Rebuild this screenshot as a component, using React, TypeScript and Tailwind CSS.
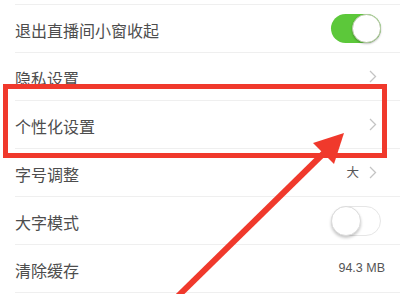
import React from "react";

const font = { fontFamily: '"Noto Sans CJK SC", "Noto Sans", sans-serif' };

function Chevron() {
  return (
    <svg width="8" height="13" viewBox="0 0 8 13" className="block">
      <path d="M1 1 L6.5 6.5 L1 12" fill="none" stroke="#c4c4c4" strokeWidth="1.3" />
    </svg>
  );
}

function ToggleOn() {
  return (
    <div className="relative w-[50px] h-[29px] rounded-full bg-[#5cc83a]">
      <div className="absolute right-[0px] top-[0px] w-[29px] h-[29px] rounded-full bg-white border border-[#b9c9a8] shadow-[0_1px_2px_rgba(0,0,0,0.25)]" />
    </div>
  );
}

function ToggleOff() {
  return (
    <div className="relative w-[50px] h-[30px] rounded-full bg-white border border-[#e6e6e6]">
      <div className="absolute left-[-1px] top-[-1px] w-[30px] h-[30px] rounded-full bg-white border border-[#dcdcdc] shadow-[0_2px_3px_rgba(0,0,0,0.22)]" />
    </div>
  );
}

function Row({ label, right, pr }: { label: string; right?: React.ReactNode; pr: string }) {
  return (
    <div className="pl-[15px]">
      <div className={`h-[48px] border-b border-[#efefef] flex items-center justify-between ${pr}`}>
        <span className="text-[16px] text-[#4d4d4d] leading-none pt-[3px]">{label}</span>
        {right}
      </div>
    </div>
  );
}

export default function App() {
  return (
    <div className="relative w-[400px] h-[294px] bg-white overflow-hidden" style={font}>
      <div className="pl-[15px]">
        <div className="h-[5px] border-b border-[#efefef]" />
      </div>
      <Row label="退出直播间小窗收起" pr="pr-[19px]" right={<ToggleOn />} />
      <Row label="隐私设置" pr="pr-[23px]" right={<Chevron />} />
      <Row label="个性化设置" pr="pr-[23px]" right={<Chevron />} />
      <Row
        label="字号调整"
        pr="pr-[23px]"
        right={
          <div className="flex items-center gap-[10px]">
            <span className="text-[12.5px] text-[#555]">大</span>
            <Chevron />
          </div>
        }
      />
      <Row label="大字模式" pr="pr-[19px]" right={<ToggleOff />} />
      <Row
        label="清除缓存"
        pr="pr-[15px]"
        right={
          <span className="text-[12.5px] text-[#555]" style={{ fontFamily: '"Liberation Sans", Arial, sans-serif' }}>
            94.3 MB
          </span>
        }
      />

      <div className="absolute left-[3px] top-[84px] w-[384px] h-[74px] border-[5px] border-[#f0392c]" />

      <svg className="absolute left-0 top-0" width="400" height="294" viewBox="0 0 400 294">
        <line x1="326" y1="151" x2="172" y2="302" stroke="#f0392c" strokeWidth="6" />
        <polygon points="344,133 313,143 334,164" fill="#f0392c" />
      </svg>
    </div>
  );
}
